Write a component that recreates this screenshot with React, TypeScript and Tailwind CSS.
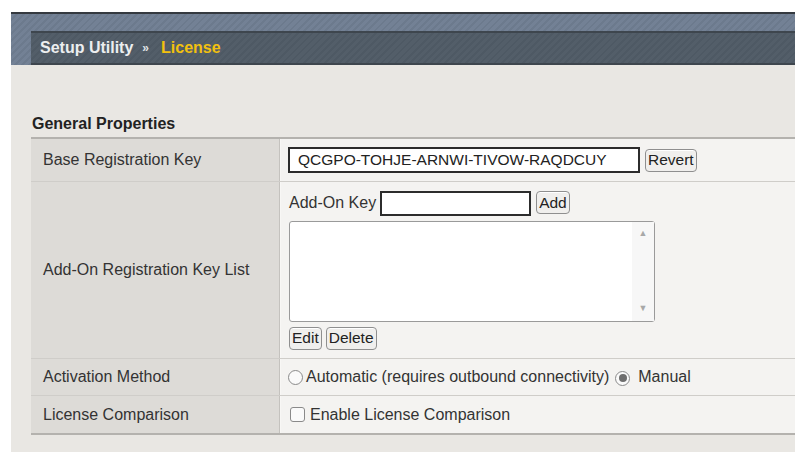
import React from 'react';

const Btn = ({ children }: { children: React.ReactNode }) => (
  <button className="h-[23px] px-[2px] rounded-[4px] border border-[#8f8f8f] bg-[#f0efed] text-[15.5px] leading-none text-[#222] shadow-[inset_0_1px_0_#fff]">
    {children}
  </button>
);

const Radio = ({ checked }: { checked?: boolean }) => (
  <span className="inline-flex h-[15px] w-[15px] items-center justify-center rounded-full border border-[#8a8a8a] bg-[#fafafa]">
    {checked && <span className="h-[8px] w-[8px] rounded-full bg-[#6e6e6e]" />}
  </span>
);

const Row = ({
  label,
  h,
  children,
  last,
}: {
  label: string;
  h: string;
  children: React.ReactNode;
  last?: boolean;
}) => (
  <div className={`flex ${h} ${last ? '' : 'border-b border-[#cfcdc9]'}`}>
    <div className="flex w-[249px] items-center border-r border-[#c4c2be] bg-[#dddbd7] pl-[12px] text-[16px] text-[#333]">
      {label}
    </div>
    <div className="flex flex-1 items-center border-l border-[#f8f7f5] bg-[#f4f3f1] pl-[7px] text-[16px] text-[#333]">
      {children}
    </div>
  </div>
);

export default function App() {
  return (
    <div className="h-[459px] w-[804px] bg-white pl-[11px] pt-[12px] font-['Liberation_Sans',Arial,sans-serif]">
      <div className="w-[784px] bg-[#e9e7e3] pb-[17px]">
        {/* header */}
        <div className="border-t-2 border-[#34393f] bg-[#728094] bg-[repeating-linear-gradient(135deg,#738195_0px,#738195_3px,#6c7a8d_3px,#6c7a8d_5px)] pl-[20px] pt-[17px]">
          <div className="flex h-[34px] items-center border-y-2 border-y-[#3e464e] bg-[#515c67] bg-[repeating-linear-gradient(135deg,#535e69_0px,#535e69_3px,#4e5964_3px,#4e5964_5px)] pl-[9px] text-[16px] font-bold">
            <span className="text-[#eceeef]">Setup Utility</span>
            <span className="ml-[9px] mr-[12px] text-[12px] text-[#dfe2e4]">»</span>
            <span className="text-[#f2c10e]">License</span>
          </div>
        </div>

        <div className="pl-[20px] pt-[49px]">
          <div className="mb-[3px] pl-[1px] text-[16px] font-bold leading-[20px] text-[#222]">General Properties</div>

          <div className="border-y-2 border-[#b4b2ae]">
            <Row label="Base Registration Key" h="h-[43px]">
              <div className="flex items-center gap-[5px]">
                <div className="flex h-[26px] w-[352px] items-center border-2 border-[#2c2c2c] bg-white pl-[8px] text-[15.5px] text-[#222]">
                  QCGPO-TOHJE-ARNWI-TIVOW-RAQDCUY
                </div>
                <Btn>Revert</Btn>
              </div>
            </Row>

            <Row label="Add-On Registration Key List" h="h-[177px]">
              <div className="flex flex-col gap-[5px] pl-[1px]">
                <div className="flex items-center">
                  <span className="mr-[4px]">Add-On Key</span>
                  <div className="h-[25px] w-[151px] border-2 border-[#2c2c2c] bg-white" />
                  <span className="ml-[5px]">
                    <Btn>Add</Btn>
                  </span>
                </div>
                <div className="flex h-[101px] w-[366px] rounded-[3px] border border-[#9a9a9a] bg-white">
                  <div className="flex-1" />
                  <div className="flex w-[22px] flex-col items-center justify-between bg-[#f7f7f7] py-[5px] text-[9px] text-[#a8a8a8]">
                    <span>▲</span>
                    <span>▼</span>
                  </div>
                </div>
                <div className="flex gap-[4px]">
                  <Btn>Edit</Btn>
                  <Btn>Delete</Btn>
                </div>
              </div>
            </Row>

            <Row label="Activation Method" h="h-[37px]">
              <div className="flex items-center">
                <Radio />
                <span className="ml-[3px]">Automatic (requires outbound connectivity)</span>
                <span className="ml-[6px]">
                  <Radio checked />
                </span>
                <span className="ml-[8px]">Manual</span>
              </div>
            </Row>

            <Row label="License Comparison" h="h-[37px]" last>
              <div className="flex items-center pl-[2px]">
                <span className="h-[15px] w-[15px] rounded-[3px] border border-[#8a8a8a] bg-[#fafafa]" />
                <span className="ml-[5px]">Enable License Comparison</span>
              </div>
            </Row>
          </div>
        </div>
      </div>
    </div>
  );
}
